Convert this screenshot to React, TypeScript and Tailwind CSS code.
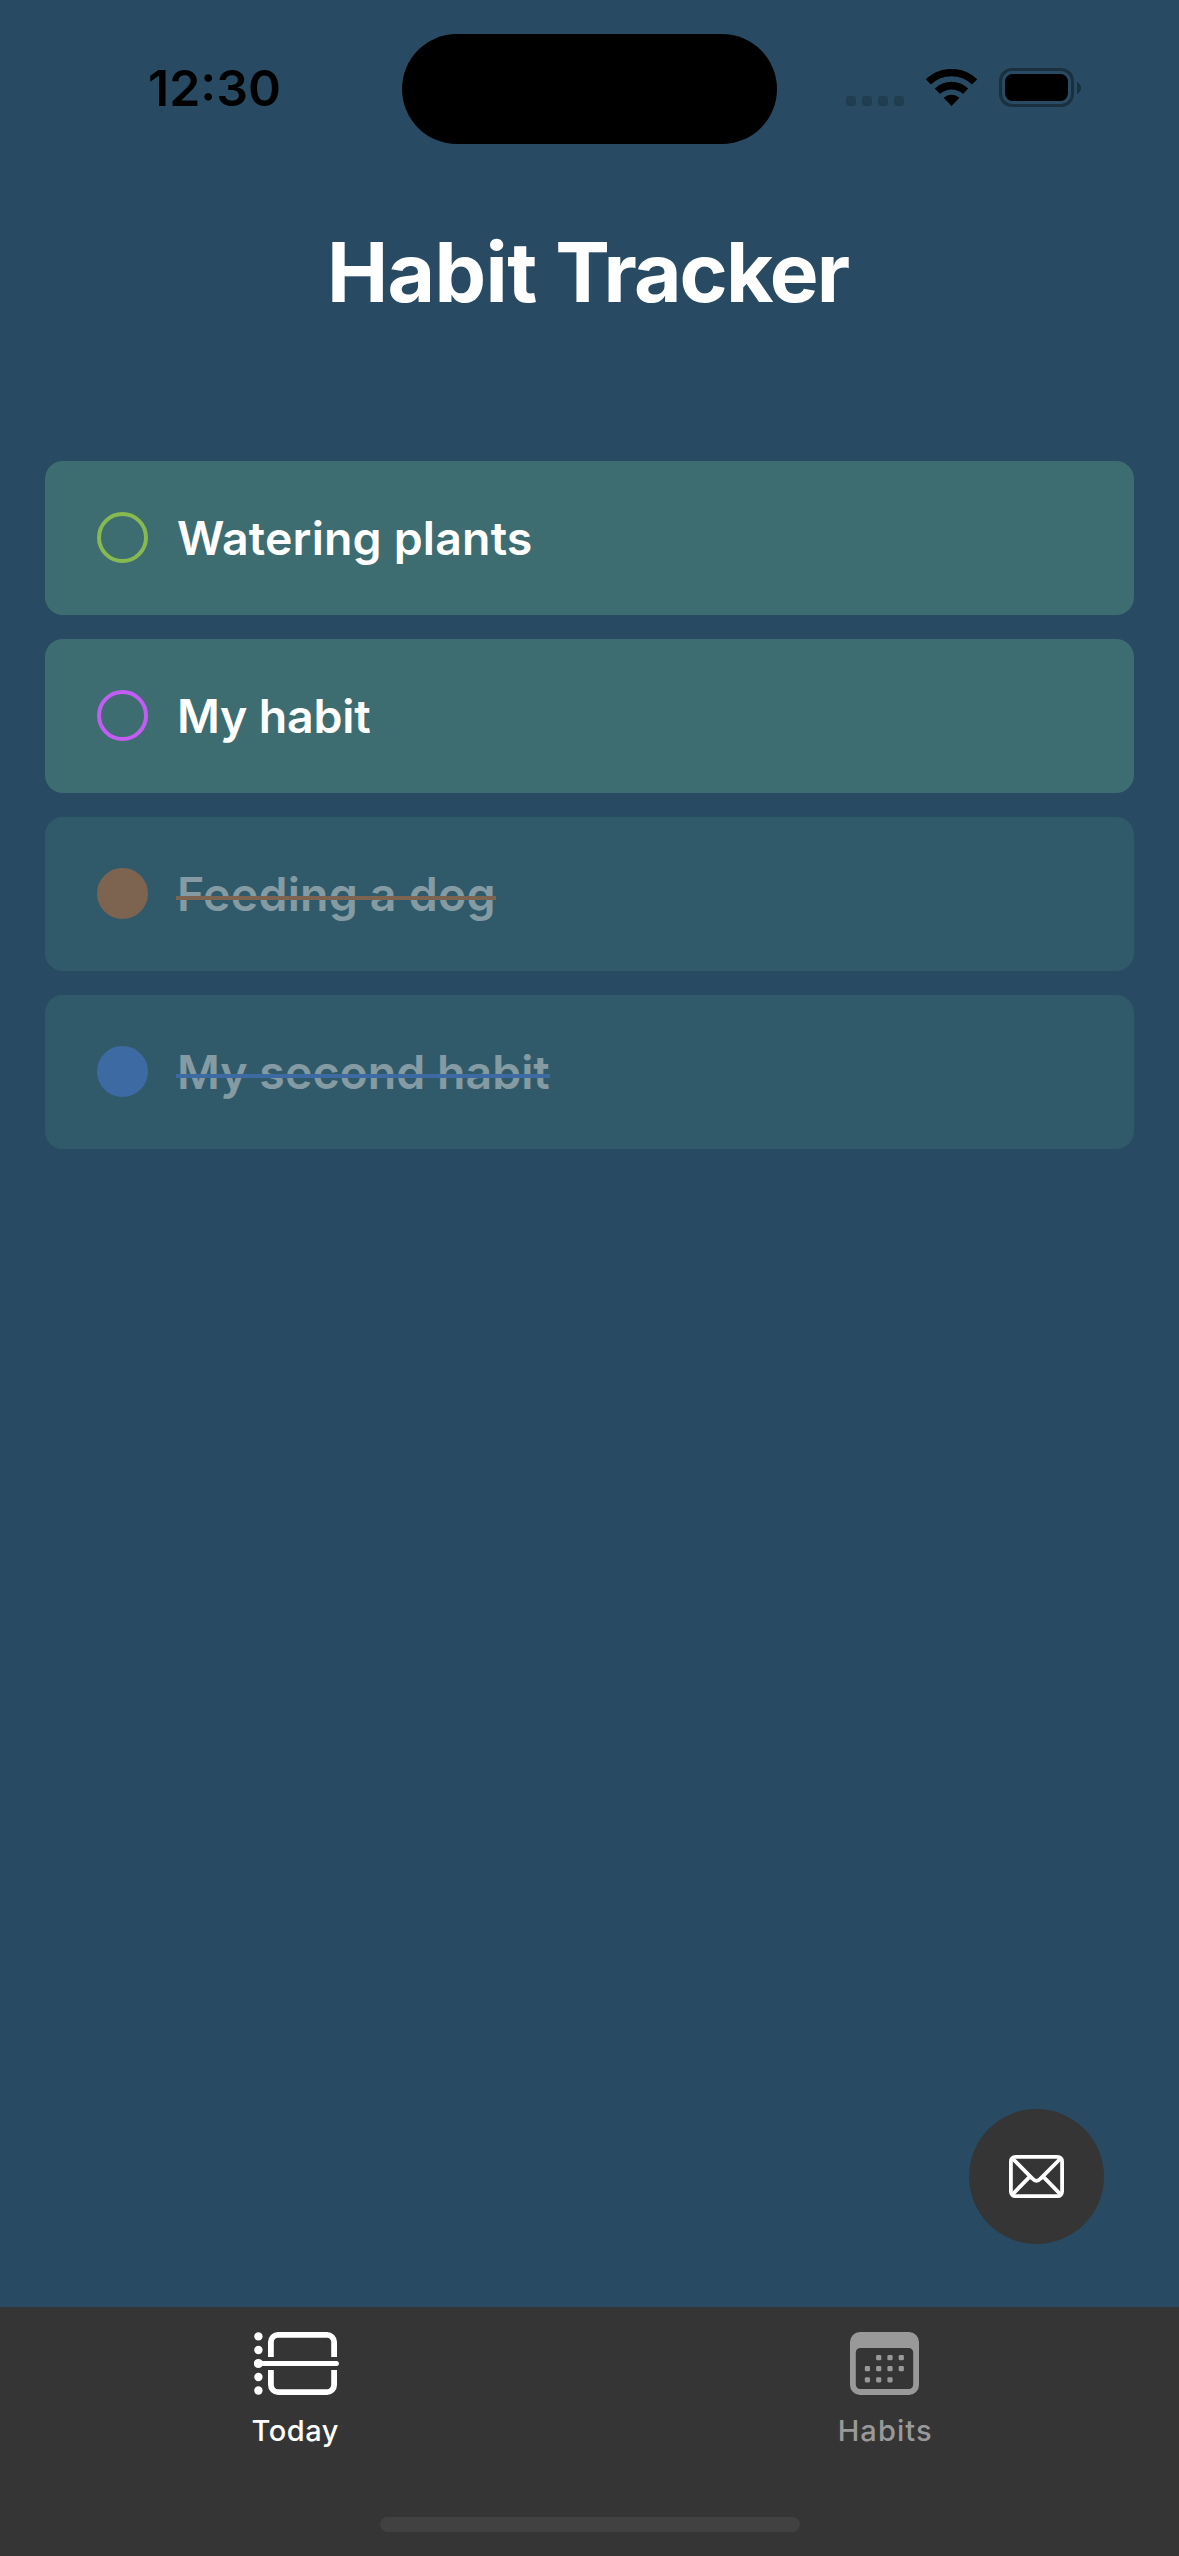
const habits = [
  { name: "Watering plants", done: false, ring: "border-[#86b950]", strike: "", tracking: "tracking-[0.15px]" },
  { name: "My habit", done: false, ring: "border-[#c25cf3]", strike: "", tracking: "tracking-[-0.2px]" },
  { name: "Feeding a dog", done: true, ring: "border-[#7d6451] bg-[#7d6451]", strike: "bg-[#7d6451]", tracking: "tracking-[0.2px]" },
  { name: "My second habit", done: true, ring: "border-[#3d6aa2] bg-[#3d6aa2]", strike: "bg-[#3d6aa2]", tracking: "tracking-[0px]" },
];

function WifiIcon() {
  return (
    <svg width="51" height="37" viewBox="0 0 51 37" fill="none" stroke="#000">
      <path d="M2.4 12.9A33.3 33.3 0 0 1 48.6 12.9" strokeWidth="7.4" />
      <path d="M11.4 22.2A20.5 20.5 0 0 1 39.6 22.2" strokeWidth="7.6" />
      <path d="M25.5 37L17.6 28.8A12 12 0 0 1 33.4 28.8Z" fill="#000" stroke="none" />
    </svg>
  );
}

function Battery() {
  return (
    <div className="flex items-center gap-[3px]">
      <div className="h-[39px] w-[75px] rounded-[13px] border-[3px] border-[#1a303f] p-[3px]">
        <div className="h-full w-full rounded-[7.5px] bg-black" />
      </div>
      <svg width="4" height="12" viewBox="0 0 4 12" fill="#18303f">
        <path d="M0 0C2.4 1 4 3.4 4 6S2.4 11 0 12Z" />
      </svg>
    </div>
  );
}

function StatusBar() {
  return (
    <header className="flex h-[176px] items-start">
      <div className="flex h-full w-[402px] items-center pl-[148px] text-[50px] font-semibold">12:30</div>
      <div className="mt-[34px] h-[110px] w-[375px] rounded-full bg-black" />
      <div className="flex h-[175px] items-center pl-[69px]">
        <div className="mt-[27px] flex gap-1.5">
          {[0, 1, 2, 3].map((i) => (
            <span key={i} className="size-2.5 rounded-[3px] bg-[#213d50]" />
          ))}
        </div>
        <div className="ml-[22px]">
          <WifiIcon />
        </div>
        <div className="ml-[22px]">
          <Battery />
        </div>
      </div>
    </header>
  );
}

function HabitRow({ habit }: { habit: (typeof habits)[number] }) {
  return (
    <li className={`flex h-[154px] items-center rounded-[18px] pl-[52px] ${habit.done ? "bg-[#305a69]" : "bg-[#3d6d70]"}`}>
      <span className={`mb-px size-[51px] rounded-full border-4 ${habit.ring}`} />
      <span
        className={`relative ml-7 whitespace-nowrap pl-px text-[46.5px] leading-[56px] font-semibold ${habit.tracking} ${
          habit.done ? "text-[#849ba4]" : "text-white"
        }`}
      >
        {habit.name}
        {habit.done && <span className={`absolute top-[30px] left-0 h-1 w-full ${habit.strike}`} />}
      </span>
    </li>
  );
}

function MailIcon() {
  return (
    <svg width="55" height="43" viewBox="0 0 55 43" fill="none" stroke="#fff" strokeWidth="3.8">
      <rect x="1.9" y="1.9" width="51.2" height="39.2" rx="4.5" />
      <path d="M3 3L23.4 23.6Q27.5 28.2 31.6 23.6L52 3M20.8 21.6L3 39.8M34.2 21.6L52 39.8" />
    </svg>
  );
}

function TodayIcon() {
  return (
    <svg width="85" height="63" viewBox="0 0 85 63" fill="none" stroke="#fff">
      <path d="M16.9 25V10A7.1 7.1 0 0 1 24 2.9H73A7.1 7.1 0 0 1 80.1 10V25" strokeWidth="5.8" />
      <path d="M16.9 38V53A7.1 7.1 0 0 0 24 60.1H73A7.1 7.1 0 0 0 80.1 53V38" strokeWidth="5.8" />
      <path d="M5 31.5H82.4" strokeWidth="5" strokeLinecap="round" />
      <g fill="#fff" stroke="none">
        <circle cx="4.4" cy="4.4" r="4.2" />
        <circle cx="4.4" cy="18" r="4.2" />
        <circle cx="4.4" cy="31.5" r="4.6" />
        <circle cx="4.4" cy="45" r="4.2" />
        <circle cx="4.4" cy="58.5" r="4.2" />
      </g>
    </svg>
  );
}

const calendarDots = [
  [28.7, 25.6], [40, 25.6], [51.3, 25.6],
  [17.4, 36.7], [28.7, 36.7], [40, 36.7], [51.3, 36.7],
  [17.4, 47.8], [28.7, 47.8], [40, 47.8],
];

function CalendarIcon() {
  return (
    <svg width="69" height="63" viewBox="0 0 69 63" fill="#999">
      <path
        fillRule="evenodd"
        d="M10 0H59A10 10 0 0 1 69 10V53A10 10 0 0 1 59 63H10A10 10 0 0 1 0 53V10A10 10 0 0 1 10 0ZM10.2 16A4.4 4.4 0 0 0 5.8 20.4V52.6A4.4 4.4 0 0 0 10.2 57H58.8A4.4 4.4 0 0 0 63.2 52.6V20.4A4.4 4.4 0 0 0 58.8 16Z"
      />
      {calendarDots.map(([x, y]) => (
        <rect key={`${x}-${y}`} x={x - 2.6} y={y - 2.6} width="5.2" height="5.2" rx="1.3" />
      ))}
    </svg>
  );
}

export default function App() {
  return (
    <div className="relative flex h-[2556px] w-[1179px] flex-col overflow-hidden bg-[#284b63] font-[Inter,sans-serif] text-black">
      <StatusBar />
      <h1 className="flex h-[193px] items-center pl-[327px] text-[82px] font-bold text-white">
        <span className="whitespace-pre tracking-[-0.65px]">{"Habit "}</span>
        <span className="tracking-[-1.9px]">Tracker</span>
      </h1>
      <ul className="flex flex-1 flex-col gap-6 px-[45px] pt-[92px]">
        {habits.map((h) => (
          <HabitRow key={h.name} habit={h} />
        ))}
      </ul>
      <button className="absolute right-[75px] bottom-[312px] flex size-[135px] items-center justify-center rounded-full bg-[#353535]">
        <MailIcon />
      </button>
      <nav className="flex h-[249px] flex-col bg-[#353535]">
        <div className="grid h-[210px] grid-cols-2 pt-[25px]">
          <div className="flex flex-col items-center text-white">
            <div className="pl-[3px]">
              <TodayIcon />
            </div>
            <span className="mt-[18px] pl-px text-[29px] leading-9 font-medium tracking-[0.5px]">Today</span>
          </div>
          <div className="flex flex-col items-center text-[#999]">
            <CalendarIcon />
            <span className="mt-[18px] pl-0.5 text-[29px] leading-9 font-medium tracking-[1.1px]">Habits</span>
          </div>
        </div>
        <div className="mx-auto h-[15px] w-[420px] rounded-full bg-[#414141]" />
      </nav>
    </div>
  );
}
